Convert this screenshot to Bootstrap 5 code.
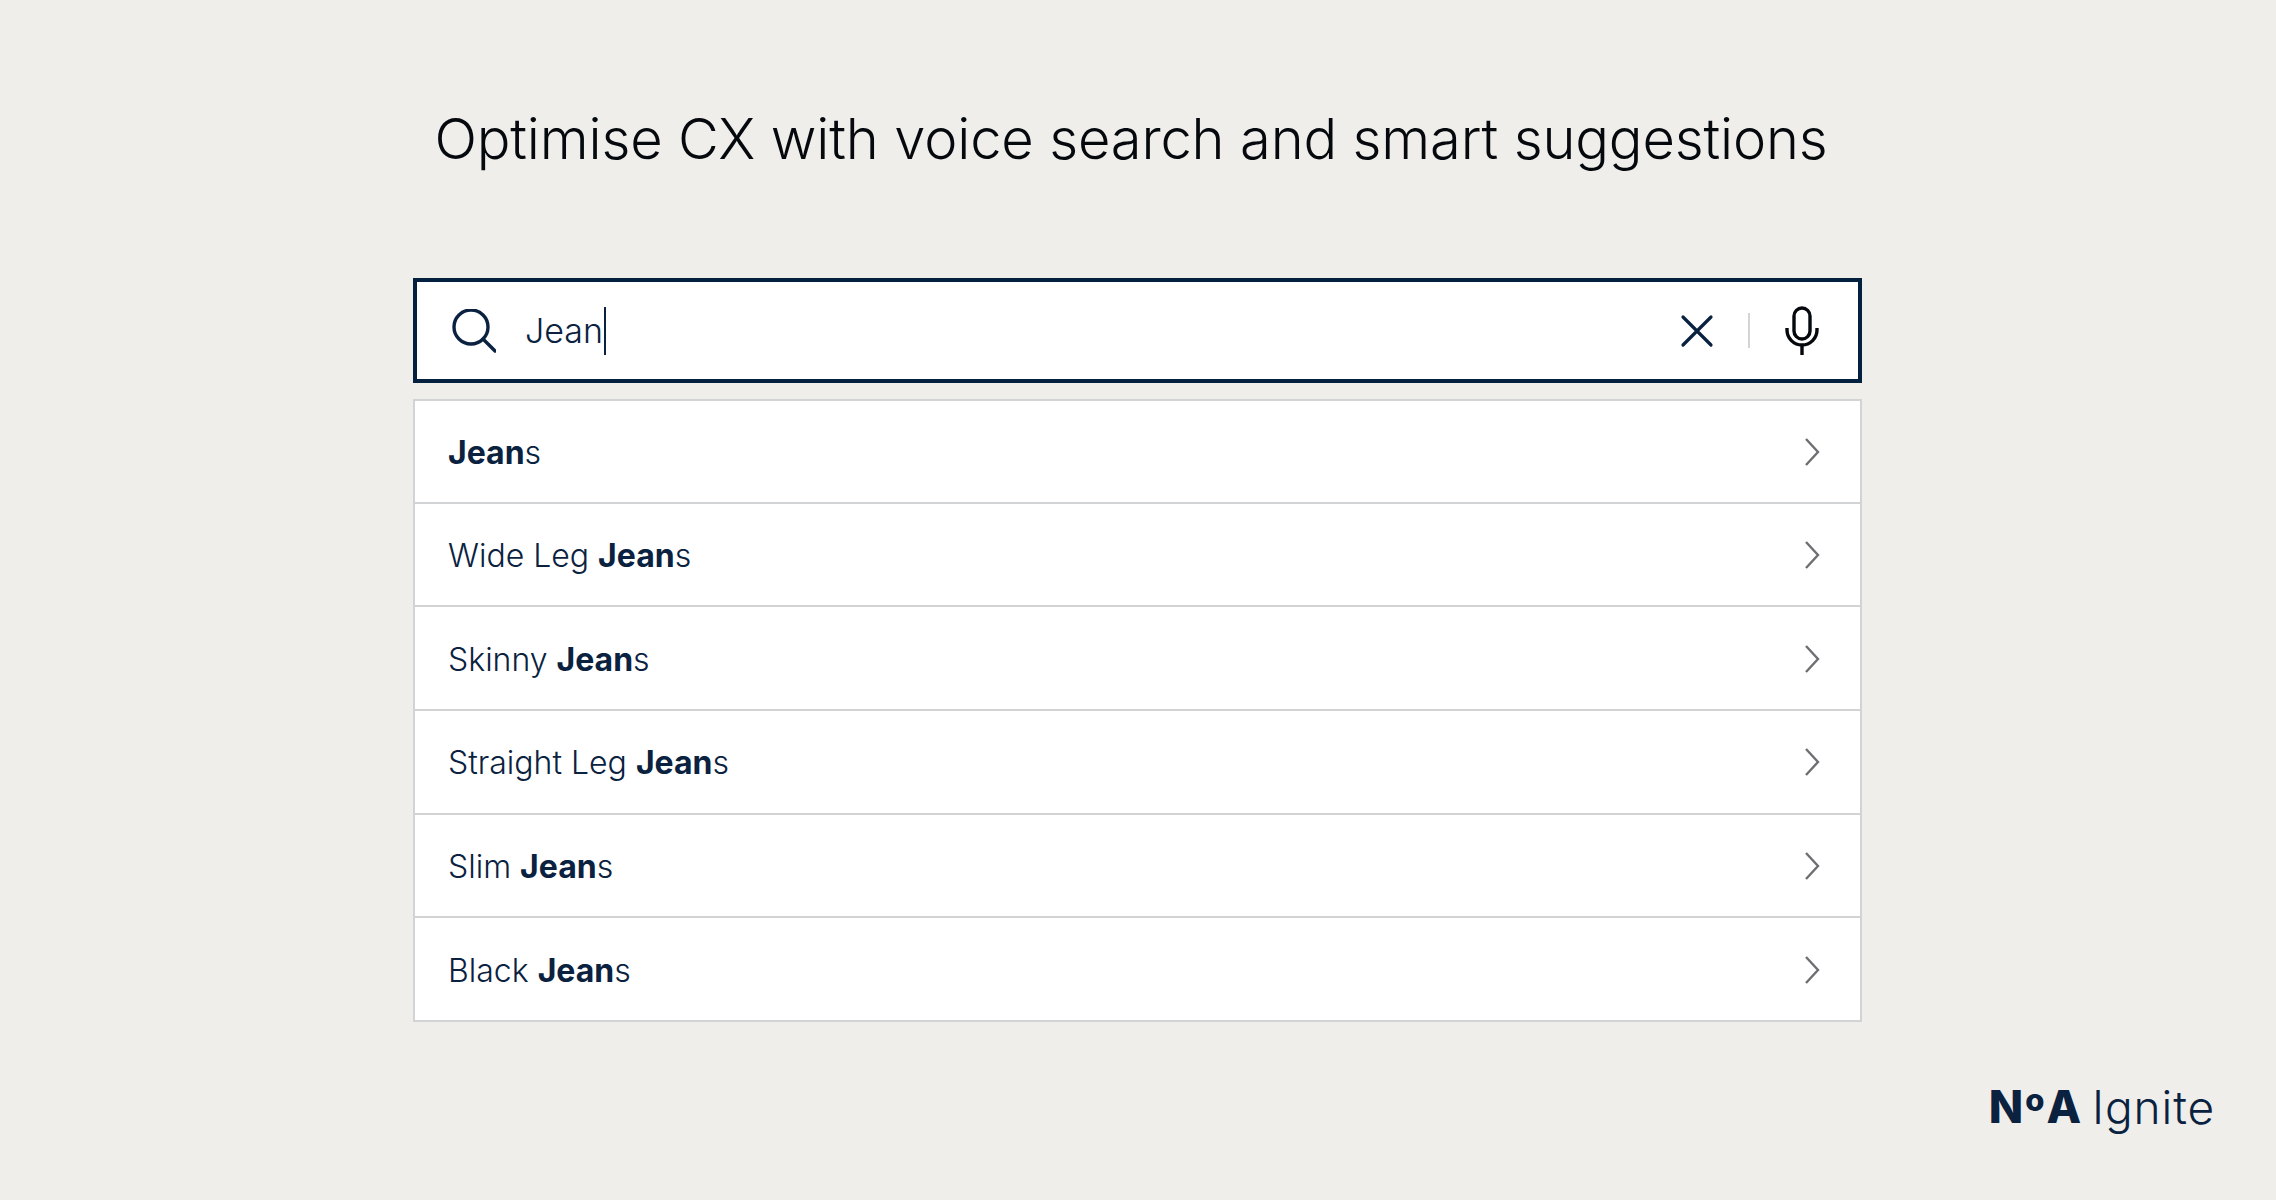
<!DOCTYPE html>
<html lang="en">
<head>
    <meta charset="UTF-8">
    <title>Voice search</title>
    <link href="https://cdn.jsdelivr.net/npm/bootstrap@5.3.0/dist/css/bootstrap.min.css" rel="stylesheet">
    <style>
        body { background: #efeeea; color: #0a2240; font-family: "Inter", "Noto Sans", sans-serif; height: 1200px; overflow: hidden; }
        .page-title { font-size: 56px; font-weight: 300; line-height: 70px; color: #05090d; padding: 104px 14px 0 0; margin-bottom: 104px; letter-spacing: -.15px; }
        .search-wrap { width: 1449px; margin-left: 413px; }
        .search-box { height: 105px; border: 4px solid #03203f; background: #fff; padding: 0 39px 0 35px; }
        .typed { font-size: 34px; font-weight: 300; margin-left: 29px; line-height: 48px; }
        .caret-bar { display: inline-block; width: 2px; height: 48px; background: #0a2240; vertical-align: top; margin-left: 1px; }
        .v-sep { width: 2px; height: 35px; background: #d4d4d4; margin: 0 35px 0 34px; }
        .suggest { margin-top: 16px; border-radius: 0; border: 2px solid #d2d3d5; }
        .suggest .list-group-item { height: 103.7px; border: 0; border-top: 2px solid #d2d3d5; border-radius: 0; padding: 1px 40px 0 33px; font-size: 32px; font-weight: 300; color: #0a2240; background: #fff; }
        .suggest .list-group-item:first-child { border-top: 0; height: 100.5px; }
        .suggest .item-text { padding-top: 2px; }
        .suggest b { font-weight: 700; }
        .logo-row { padding: 60px 61px 0 0; }
        .logo-mark { font-weight: 800; font-size: 45px; line-height: 50px; letter-spacing: 2px; }
        .logo-o { font-size: 31px; vertical-align: 12px; line-height: 0; }
        .logo-name { font-size: 46px; font-weight: 300; line-height: 50px; margin-left: 9px; letter-spacing: .9px; }
    </style>
</head>
<body>
<h1 class="page-title text-center">Optimise CX with voice search and smart suggestions</h1>

<div class="search-wrap">
    <div class="search-box d-flex align-items-center">
        <svg width="44" height="44" viewBox="0 0 44 44" fill="none" stroke="#0a2240" stroke-width="3.4" stroke-linecap="round">
            <circle cx="19" cy="18" r="17"/><path d="M31 30 L43 42"/>
        </svg>
        <div class="typed flex-grow-1">Jean<span class="caret-bar"></span></div>
        <svg width="34" height="34" viewBox="0 0 34 34" fill="none" stroke="#0a2240" stroke-width="3.2" stroke-linecap="round">
            <path d="M3 3 L31 31 M31 3 L3 31"/>
        </svg>
        <div class="v-sep"></div>
        <svg width="34" height="50" viewBox="0 0 34 50" fill="none" stroke="#05090d" stroke-width="3.4">
            <rect x="9" y="2" width="16" height="31" rx="8"/>
            <path d="M2 22 V24 A15 15 0 0 0 32 24 V22 M17 39 V49"/>
        </svg>
    </div>

    <div class="list-group suggest" id="suggestList"></div>
</div>

<div class="logo-row d-flex justify-content-end align-items-center">
    <span class="logo-mark">N<span class="logo-o">o</span>A</span>
    <span class="logo-name">Ignite</span>
</div>

<script>
    const chevron = `<svg width="16" height="30" viewBox="0 0 16 30" fill="none" stroke="#6e6f72" stroke-width="2.4"><path d="M2 2 L14 15 L2 28"/></svg>`;
    const items = ['', 'Wide Leg ', 'Skinny ', 'Straight Leg ', 'Slim ', 'Black '];
    document.getElementById('suggestList').innerHTML = items.map(p =>
        `<div class="list-group-item d-flex justify-content-between align-items-center"><span class="item-text">${p}<b>Jean</b>s</span>${chevron}</div>`).join('');
</script>
<script src="https://cdn.jsdelivr.net/npm/bootstrap@5.3.0/dist/js/bootstrap.bundle.min.js"></script>
</body>
</html>
